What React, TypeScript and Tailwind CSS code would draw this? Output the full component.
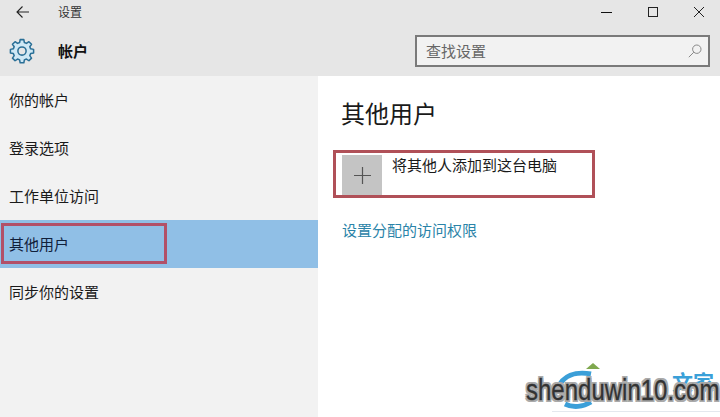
import React from "react";

const font = { fontFamily: '"Noto Sans CJK SC", "Liberation Sans", sans-serif' };
const items = ["你的帐户", "登录选项", "工作单位访问", "其他用户", "同步你的设置"];

export default function App() {
  return (
    <div className="relative flex h-[417px] w-[720px] flex-col overflow-hidden bg-white text-[#1a1a1a]" style={font}>
      <header className="h-[76px] shrink-0 bg-[#e6e6e6]">
        <div className="flex h-[24px] items-center">
          <svg className="ml-[16px]" width="13" height="12" viewBox="0 0 13 12" fill="none" stroke="#222" strokeWidth="1.1">
            <path d="M13 6H1M6.5.5 1 6l5.5 5.5" />
          </svg>
          <span className="ml-[29px] text-[12px] leading-none text-[#333]">设置</span>
          <div className="ml-auto flex items-center">
            <div className="h-px w-[11px] bg-[#111]" />
            <div className="ml-[36px] h-[10px] w-[10px] border border-[#222]" />
            <svg className="ml-[36px] mr-[16px]" width="10" height="10" viewBox="0 0 10 10" stroke="#222" strokeWidth="1">
              <path d="M0 0l10 10M10 0 0 10" />
            </svg>
          </div>
        </div>
        <div className="flex h-[52px] items-center pt-[1px]">
          <svg className="ml-[9px]" width="26" height="26" viewBox="0 0 24 24" fill="#cfe8f5" stroke="#2a6f96" strokeWidth="1.4" strokeLinejoin="round">
            <path d="M10.3 1.5h3.4l.5 2.7 1.9.8 2.3-1.6 2.4 2.4-1.6 2.3.8 1.9 2.7.5v3.4l-2.7.5-.8 1.9 1.6 2.3-2.4 2.4-2.3-1.6-1.9.8-.5 2.7h-3.4l-.5-2.7-1.9-.8-2.3 1.6-2.4-2.4 1.6-2.3-.8-1.9-2.7-.5v-3.4l2.7-.5.8-1.9-1.6-2.3 2.4-2.4 2.3 1.6 1.9-.8z" />
            <circle cx="12" cy="12" r="3.8" fill="#e6e6e6" />
          </svg>
          <span className="ml-[23px] text-[15px] font-bold leading-none text-[#111]">帐户</span>
          <div className="ml-auto mr-[10px] flex h-[32px] w-[295px] items-center border-[2px] border-[#7a7a7a] bg-[#f2f2f2] pl-[9px] pr-[6px]">
            <span className="text-[15px] leading-none text-[#666]">查找设置</span>
            <svg className="ml-auto" width="14" height="14" viewBox="0 0 14 14" fill="none" stroke="#888" strokeWidth="1">
              <circle cx="8.8" cy="5.2" r="4.2" />
              <path d="M5.8 8.2.8 13.2" />
            </svg>
          </div>
        </div>
      </header>

      <div className="flex flex-1">
        <nav className="w-[318px] shrink-0 bg-[#f2f2f2]">
          {items.map((t, i) => (
            <div
              key={t}
              className={`relative flex h-[48px] items-center pl-[9px] text-[15px] ${i === 3 ? "bg-[#90bfe6] text-[#10203a]" : "text-[#1a1a1a]"}`}
            >
              {i === 3 && <div className="absolute left-px top-[3px] h-[41px] w-[166px] border-[3px] border-[#b25068]" />}
              {t}
            </div>
          ))}
        </nav>

        <main className="flex-1 bg-white pl-[24px] pt-[22px]">
          <h1 className="-ml-px text-[24px] leading-[30px] text-[#1a1a1a]">其他用户</h1>
          <div className="relative -ml-[9px] mt-[22px] h-[48px] w-[262px] border-[3px] border-[#b05058]">
            <div className="absolute left-[6px] top-[2px] flex h-[40px] w-[40px] items-center justify-center bg-[#c4c4c4]">
              <svg width="17" height="17" viewBox="0 0 17 17" stroke="#555" strokeWidth="1.2">
                <path d="M8.5 0v17M0 8.5h17" />
              </svg>
            </div>
            <span className="absolute left-[56px] top-[2px] whitespace-nowrap text-[15px] leading-[20px] text-[#1a1a1a]">将其他人添加到这台电脑</span>
          </div>
          <a className="mt-[22px] block text-[15px] leading-[20px] text-[#2a83a8]">设置分配的访问权限</a>
        </main>
      </div>

      <div className="absolute left-[552px] top-[368px] h-[44px] w-[168px] border-b border-[#e4e8ee] bg-white" />
      <div className="absolute left-[586px] top-[363px] h-0 w-0 border-x-[7px] border-b-[6px] border-x-transparent border-b-[#7fa84e]" />
      <svg className="absolute left-[555px] top-[368px]" width="60" height="42" viewBox="0 0 60 42" fill="none" stroke="#3b9fd8" strokeWidth="5">
        <path d="M3 20C8 8 20 3 36 6" />
        <path d="M10 36c8 4 18 3 26-2" />
      </svg>
      <span className="absolute left-[672px] top-[371px] whitespace-nowrap text-[21px] font-bold leading-none text-[#3aa0d8]">文家</span>
      <span
        className="absolute left-[526px] top-[372px] origin-left scale-x-[0.8] whitespace-nowrap text-[30px] leading-[36px] text-[#333]"
        style={{ fontFamily: '"Liberation Sans", sans-serif', WebkitTextStroke: "0.3px #333", textShadow: "2px 0 0 #aaa, -2px 0 0 #aaa, 0 2px 0 #aaa, 0 -2px 0 #aaa, 2px 2px 0 #aaa, -2px -2px 0 #aaa, 2px -2px 0 #aaa, -2px 2px 0 #aaa" }}
      >
        shenduwin10.com
      </span>
    </div>
  );
}
